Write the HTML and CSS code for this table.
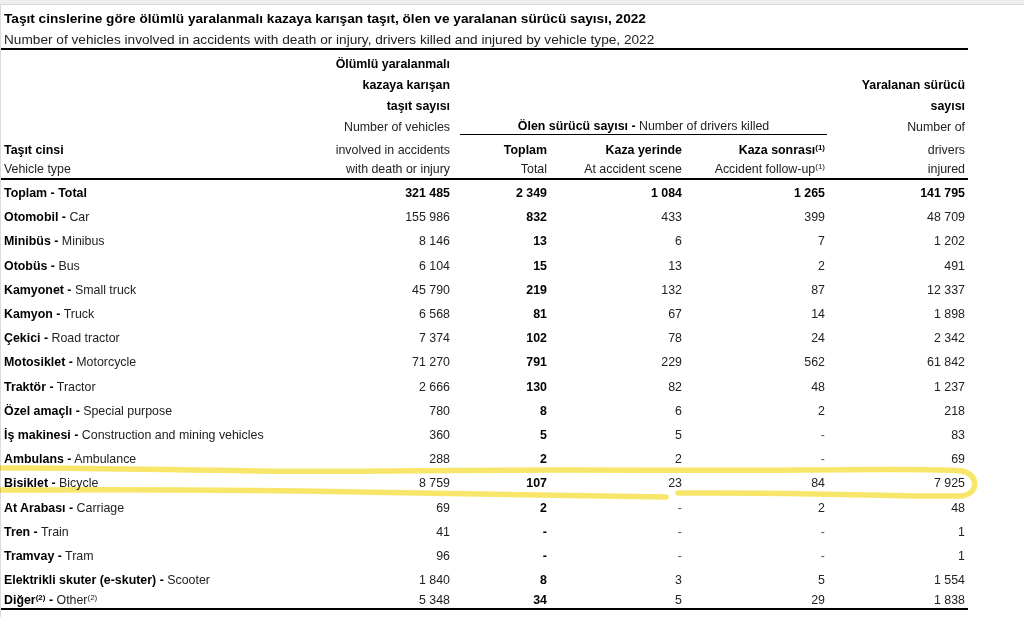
FILE: index.html
```html
<!DOCTYPE html>
<html lang="tr">
<head>
<meta charset="utf-8">
<title>Taşıt cinslerine göre sürücü sayısı, 2022</title>
<link rel="stylesheet" href="styles.css">
</head>
<body>
<div class="topbar"></div>
<main class="sheet">
  <h1 class="title">Taşıt cinslerine göre ölümlü yaralanmalı kazaya karışan taşıt, ölen ve yaralanan sürücü sayısı, 2022</h1>
  <p class="subtitle">Number of vehicles involved in accidents with death or injury, drivers killed and injured by vehicle type, 2022</p>
  <table class="data">
    <colgroup>
      <col class="c1"><col class="c2"><col class="c3"><col class="c4"><col class="c5"><col class="c6">
    </colgroup>
    <thead>
      <tr class="h1">
        <th></th>
        <th class="num"><b>Ölümlü yaralanmalı</b><br><b>kazaya karışan</b><br><b>taşıt sayısı</b><br>Number of vehicles</th>
        <th colspan="3" class="group"><div class="group-label"><b>Ölen sürücü sayısı -</b> Number of drivers killed</div></th>
        <th class="num"><b>Yaralanan sürücü</b><br><b>sayısı</b><br>Number of</th>
      </tr>
      <tr class="h2">
        <th class="lbl"><b>Taşıt cinsi</b><br>Vehicle type</th>
        <th class="num">involved in accidents<br>with death or injury</th>
        <th class="num"><b>Toplam</b><br>Total</th>
        <th class="num"><b>Kaza yerinde</b><br>At accident scene</th>
        <th class="num"><b>Kaza sonrası<sup class="fn">(1)</sup></b><br>Accident follow-up<sup class="fn">(1)</sup></th>
        <th class="num">drivers<br>injured</th>
      </tr>
    </thead>
    <tbody>
      <tr class="total"><td class="lbl"><b>Toplam -</b> Total</td><td class="num">321 485</td><td class="num">2 349</td><td class="num">1 084</td><td class="num">1 265</td><td class="num">141 795</td></tr>
      <tr><td class="lbl"><b>Otomobil -</b> Car</td><td class="num">155 986</td><td class="num strong">832</td><td class="num">433</td><td class="num">399</td><td class="num">48 709</td></tr>
      <tr><td class="lbl"><b>Minibüs -</b> Minibus</td><td class="num">8 146</td><td class="num strong">13</td><td class="num">6</td><td class="num">7</td><td class="num">1 202</td></tr>
      <tr><td class="lbl"><b>Otobüs -</b> Bus</td><td class="num">6 104</td><td class="num strong">15</td><td class="num">13</td><td class="num">2</td><td class="num">491</td></tr>
      <tr><td class="lbl"><b>Kamyonet -</b> Small truck</td><td class="num">45 790</td><td class="num strong">219</td><td class="num">132</td><td class="num">87</td><td class="num">12 337</td></tr>
      <tr><td class="lbl"><b>Kamyon -</b> Truck</td><td class="num">6 568</td><td class="num strong">81</td><td class="num">67</td><td class="num">14</td><td class="num">1 898</td></tr>
      <tr><td class="lbl"><b>Çekici -</b> Road tractor</td><td class="num">7 374</td><td class="num strong">102</td><td class="num">78</td><td class="num">24</td><td class="num">2 342</td></tr>
      <tr><td class="lbl"><b>Motosiklet -</b> Motorcycle</td><td class="num">71 270</td><td class="num strong">791</td><td class="num">229</td><td class="num">562</td><td class="num">61 842</td></tr>
      <tr><td class="lbl"><b>Traktör -</b> Tractor</td><td class="num">2 666</td><td class="num strong">130</td><td class="num">82</td><td class="num">48</td><td class="num">1 237</td></tr>
      <tr><td class="lbl"><b>Özel amaçlı -</b> Special purpose</td><td class="num">780</td><td class="num strong">8</td><td class="num">6</td><td class="num">2</td><td class="num">218</td></tr>
      <tr><td class="lbl"><b>İş makinesi -</b> Construction and mining vehicles</td><td class="num">360</td><td class="num strong">5</td><td class="num">5</td><td class="num dash">-</td><td class="num">83</td></tr>
      <tr><td class="lbl"><b>Ambulans -</b> Ambulance</td><td class="num">288</td><td class="num strong">2</td><td class="num">2</td><td class="num dash">-</td><td class="num">69</td></tr>
      <tr><td class="lbl"><b>Bisiklet -</b> Bicycle</td><td class="num">8 759</td><td class="num strong">107</td><td class="num">23</td><td class="num">84</td><td class="num">7 925</td></tr>
      <tr><td class="lbl"><b>At Arabası -</b> Carriage</td><td class="num">69</td><td class="num strong">2</td><td class="num dash">-</td><td class="num">2</td><td class="num">48</td></tr>
      <tr><td class="lbl"><b>Tren -</b> Train</td><td class="num">41</td><td class="num strong">-</td><td class="num dash">-</td><td class="num dash">-</td><td class="num">1</td></tr>
      <tr><td class="lbl"><b>Tramvay -</b> Tram</td><td class="num">96</td><td class="num strong">-</td><td class="num dash">-</td><td class="num dash">-</td><td class="num">1</td></tr>
      <tr><td class="lbl"><b>Elektrikli skuter (e-skuter) -</b> Scooter</td><td class="num">1 840</td><td class="num strong">8</td><td class="num">3</td><td class="num">5</td><td class="num">1 554</td></tr>
      <tr class="last"><td class="lbl"><b>Diğer<sup class="fn">(2)</sup> -</b> Other<sup class="fn">(2)</sup></td><td class="num">5 348</td><td class="num strong">34</td><td class="num">5</td><td class="num">29</td><td class="num">1 838</td></tr>
    </tbody>
  </table>
</main>
<svg class="marker" width="1024" height="617" viewBox="0 0 1024 617" aria-hidden="true">
  <path d="M0,468 C120,467 240,473 380,471 S700,471 800,470 S945,469 962,471 C978,474 980,493 962,496 C900,497 820,492 678,493" />
  <path d="M666,497 C560,496 450,493 300,491 S60,490 0,490" />
</svg>
</body>
</html>
```

FILE: styles.css
```css
html, body {
  margin: 0;
  padding: 0;
  background: #ffffff;
}

body {
  position: relative;
  width: 1024px;
  height: 617px;
  overflow: hidden;
  font-family: "Liberation Sans", Arial, sans-serif;
  color: #222;
}

.topbar {
  height: 4px;
  background: #efefef;
  border-bottom: 1px solid #d9d9d9;
}

.sheet {
  border-left: 1px solid #dcdcdc;
  height: 612px;
}

.title {
  margin: 0;
  padding: 3px 0 0 3px;
  font-size: 13.65px;
  line-height: 21px;
  font-weight: bold;
  color: #000;
}

.subtitle {
  margin: 0;
  padding: 2px 0 0 3px;
  font-size: 13.65px;
  line-height: 17px;
  color: #222;
}

.data {
  border-collapse: collapse;
  table-layout: fixed;
  width: 967px;
  border-top: 2px solid #000;
  font-size: 12.4px;
}

.c1 { width: 299px; }
.c2 { width: 152px; }
.c3 { width: 97px; }
.c4 { width: 135px; }
.c5 { width: 143px; }
.c6 { width: 141px; }

.data b {
  color: #000;
}

.data th {
  font-weight: normal;
  vertical-align: bottom;
  padding: 0;
  white-space: nowrap;
}

.h1 th {
  padding-top: 4px;
  line-height: 21px;
}

.h2 th {
  padding-top: 3px;
  line-height: 18.5px;
  border-bottom: 2px solid #000;
}

.group {
  text-align: center;
}

.data .group-label {
  margin: 0 0 3px 8px;
  line-height: 15px;
  border-bottom: 1px solid #000;
}

.data td {
  padding: 2px 0 0;
  line-height: 22.2px;
  white-space: nowrap;
}

.data .lbl {
  text-align: left;
  padding-left: 3px;
}

.data .num {
  text-align: right;
  padding-right: 2px;
}

.data tr td:last-child,
.data tr th:last-child {
  padding-right: 3px;
}

.total td,
.data td.strong {
  font-weight: bold;
  color: #000;
}

.data td.dash {
  color: #555;
}

.data .last td {
  line-height: 15px;
  padding-bottom: 0;
  border-bottom: 2px solid #000;
}

.fn {
  font-size: 8px;
  line-height: 0;
  vertical-align: 4px;
}

.marker {
  position: absolute;
  left: 0;
  top: 0;
  pointer-events: none;
  mix-blend-mode: multiply;
}

.marker path {
  fill: none;
  stroke: #f7e35a;
  stroke-width: 5.5;
  stroke-linecap: round;
  stroke-linejoin: round;
  opacity: 0.9;
}
```
